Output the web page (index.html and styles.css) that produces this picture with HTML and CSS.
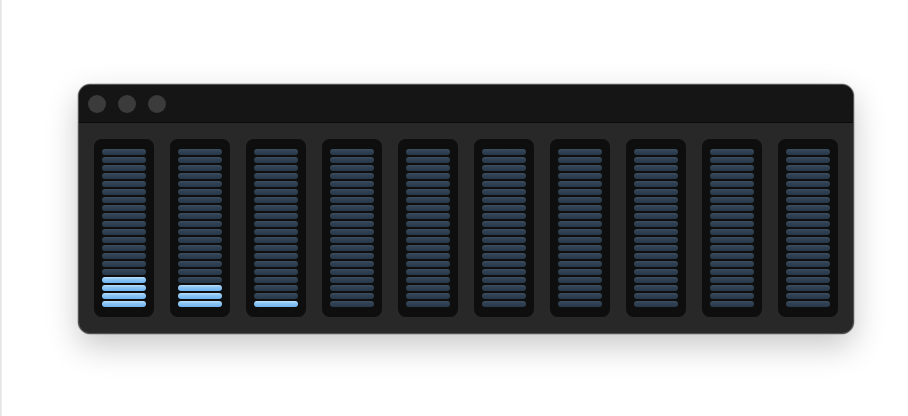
FILE: index.html
```html
<!DOCTYPE html>
<html>
<head>
<meta charset="utf-8">
<link rel="stylesheet" href="styles.css">
</head>
<body>
<div class="edge"></div>
<div class="stage">
  <div class="window">
    <div class="titlebar">
      <span class="light"></span><span class="light"></span><span class="light"></span>
    </div>
    <div class="meters" id="meters"></div>
  </div>
</div>
<script src="app.js"></script>
</body>
</html>
```
FILE: styles.css
```css
html, body {
  margin: 0;
  padding: 0;
  background: #ffffff;
  font-family: "Liberation Sans", Arial, sans-serif;
}
body {
  display: flex;
  width: 908px;
  height: 416px;
  overflow: hidden;
}
.edge {
  width: 2px;
  height: 416px;
  background: linear-gradient(to right, #e2e2e2, #eeeeee);
  flex: none;
}
.stage {
  padding: 84px 0 0 76px;
}
.window {
  width: 774px;
  height: 248px;
  border: 1px solid #525252;
  border-radius: 12px;
  overflow: hidden;
  background: #282828;
  box-shadow: 0 12px 32px rgba(0, 0, 0, 0.22), 0 0 0 0.5px rgba(0,0,0,0.3);
  display: flex;
  flex-direction: column;
}
.titlebar {
  height: 37px;
  flex: none;
  background: #151515;
  border-bottom: 1px solid #0b0b0b;
  display: flex;
  align-items: center;
  gap: 12px;
  padding: 0 0 0 9px;
}
.light {
  width: 18px;
  height: 18px;
  border-radius: 50%;
  background: #3b3b3b;
}
.meters {
  flex: 1;
  display: flex;
  gap: 16px;
  padding: 16px 15px 0 15px;
}
.col {
  width: 44px;
  height: 158px;
  padding: 10px 8px;
  background: #0e0e0e;
  border-radius: 8px;
  display: flex;
  flex-direction: column;
  gap: 2px;
}
.bar {
  height: 6px;
  border-radius: 3px;
  background: linear-gradient(to bottom, #3c4f61 0%, #2f4153 40%, #28384a 100%);
}
.bar.on {
  background: linear-gradient(to bottom, #bfe0fc 0%, #8fc7f6 35%, #6eb2f0 100%);
}
```
FILE: app.js
```js
var levels = [4, 3, 1, 0, 0, 0, 0, 0, 0, 0];
var meters = document.getElementById('meters');
levels.forEach(function (lv) {
  var col = document.createElement('div');
  col.className = 'col';
  for (var i = 0; i < 20; i++) {
    var b = document.createElement('div');
    b.className = 'bar' + (i >= 20 - lv ? ' on' : '');
    col.appendChild(b);
  }
  meters.appendChild(col);
});
```
